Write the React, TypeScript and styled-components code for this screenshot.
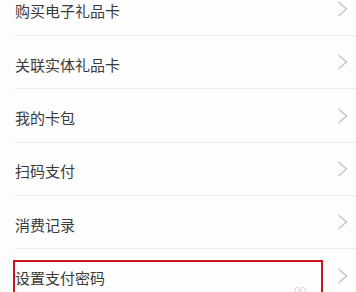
import styled, { createGlobalStyle } from "styled-components";

const GlobalStyle = createGlobalStyle`
  html, body {
    margin: 0;
    padding: 0;
    background: #fdfdfd;
    overflow: hidden;
  }
  body {
    font-family: "Noto Sans CJK SC", "Noto Sans", sans-serif;
  }
`;

const items = [
  "购买电子礼品卡",
  "关联实体礼品卡",
  "我的卡包",
  "扫码支付",
  "消费记录",
  "设置支付密码",
];

export default function App() {
  return (
    <>
      <GlobalStyle />
      <Menu>
        {items.map((label, i) => (
          <Row key={label}>
            <Label>{label}</Label>
            <Chevron width="11" height="16" viewBox="0 0 11 16">
              <polyline
                points="1.5,1 9.5,8 1.5,15"
                fill="none"
                stroke="#c2c2c2"
                strokeWidth="1.3"
              />
            </Chevron>
            {i === items.length - 1 && (
              <>
                <Highlight />
                <Watermark>00</Watermark>
              </>
            )}
          </Row>
        ))}
      </Menu>
    </>
  );
}

const Menu = styled.div`
  margin-top: -17.3px;
  display: flex;
  flex-direction: column;
`;

const Row = styled.div`
  position: relative;
  box-sizing: border-box;
  height: 53.33px;
  margin-left: 14px;
  padding: 0 8px 0 1px;
  border-bottom: 1px solid #ebebeb;
  display: flex;
  align-items: center;
  justify-content: space-between;
`;

const Label = styled.span`
  padding-top: 4px;
  font-size: 15px;
  color: #3a3a3a;
  letter-spacing: 0;
`;

const Chevron = styled.svg`
  display: block;
`;

const Highlight = styled.div`
  position: absolute;
  left: -1px;
  top: 11px;
  width: 310px;
  height: 60px;
  box-sizing: border-box;
  border: 2px solid #c8141f;
`;

const Watermark = styled.span`
  position: absolute;
  left: 280px;
  top: 36px;
  font-family: "Liberation Sans", sans-serif;
  font-size: 11px;
  color: #d8d8d8;
`;
